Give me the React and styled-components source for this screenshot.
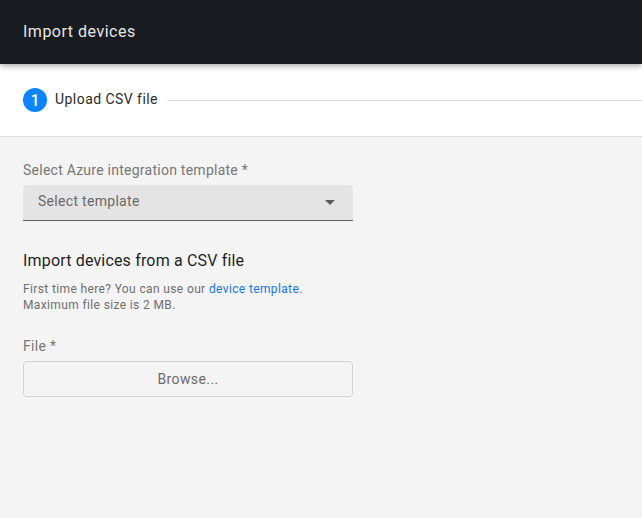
import styled, { createGlobalStyle } from "styled-components";

const GlobalStyle = createGlobalStyle`
  html, body {
    margin: 0;
    padding: 0;
    background: #f4f4f4;
    font-family: Roboto, "Liberation Sans", sans-serif;
  }
`;

const App = () => {
  return (
    <Page>
      <GlobalStyle />
      <Header>
        <HeaderTitle>Import devices</HeaderTitle>
      </Header>
      <Stepper>
        <StepBadge>1</StepBadge>
        <StepLabel>Upload CSV file</StepLabel>
        <StepLine />
      </Stepper>
      <Content>
        <Label>Select Azure integration template *</Label>
        <Select>
          <SelectText>Select template</SelectText>
          <Caret />
        </Select>
        <SectionTitle>Import devices from a CSV file</SectionTitle>
        <Help>
          First time here? You can use our <Link href="#">device template</Link>.
          <br />
          Maximum file size is 2 MB.
        </Help>
        <FileLabel>File *</FileLabel>
        <BrowseButton>Browse...</BrowseButton>
      </Content>
    </Page>
  );
};

export default App;

const Page = styled.div`
  min-height: 518px;
  background: #f4f4f4;
`;

const Header = styled.div`
  height: 64px;
  background: #181b1f;
  display: flex;
  align-items: center;
  padding: 0 23px;
  box-shadow: 0 2px 6px rgba(0, 0, 0, 0.35);
  position: relative;
  z-index: 1;
`;

const HeaderTitle = styled.h1`
  margin: 0 0 2px;
  font-size: 16px;
  font-weight: 400;
  letter-spacing: 0.5px;
  color: #e6e6e6;
`;

const Stepper = styled.div`
  height: 72px;
  background: #fff;
  border-bottom: 1px solid #dcdcdc;
  display: flex;
  align-items: center;
  padding-left: 23px;
`;

const StepBadge = styled.span`
  width: 24px;
  height: 24px;
  border-radius: 50%;
  background: #0a84ff;
  color: #fff;
  font-size: 16px;
  font-weight: 500;
  display: flex;
  align-items: center;
  justify-content: center;
`;

const StepLabel = styled.span`
  margin: 0 0 2px 8px;
  font-size: 14px;
  letter-spacing: 0.45px;
  color: #2b2b2b;
`;

const StepLine = styled.div`
  flex: 1;
  height: 1px;
  background: #dcdcdc;
  margin-left: 9px;
`;

const Content = styled.div`
  padding: 24px 23px 0;
  width: 330px;
  display: flex;
  flex-direction: column;
`;

const Label = styled.div`
  font-size: 14px;
  letter-spacing: 0.25px;
  color: #777;
  line-height: 18px;
`;

const Select = styled.div`
  margin-top: 6px;
  height: 35px;
  background: #e4e4e4;
  border-radius: 4px 4px 0 0;
  border-bottom: 1px solid #5c5c5c;
  display: flex;
  align-items: center;
  justify-content: space-between;
  padding: 0 18px 0 15px;
`;

const SelectText = styled.span`
  font-size: 14px;
  letter-spacing: 0.3px;
  color: #6a6a6a;
  margin-bottom: 3px;
`;

const Caret = styled.span`
  width: 0;
  height: 0;
  border-left: 5px solid transparent;
  border-right: 5px solid transparent;
  border-top: 5px solid #5a5a5a;
`;

const SectionTitle = styled.h2`
  margin: 30px 0 0;
  font-size: 16px;
  font-weight: 400;
  letter-spacing: 0.17px;
  color: #1f1f1f;
  line-height: 20px;
`;

const Help = styled.p`
  margin: 10px 0 0;
  font-size: 12px;
  line-height: 16px;
  letter-spacing: 0.37px;
  color: #6f6f6f;
`;

const Link = styled.a`
  color: #1a73e8;
  text-decoration: none;
`;

const FileLabel = styled.div`
  margin-top: 24px;
  font-size: 14px;
  letter-spacing: 0.3px;
  color: #777;
  line-height: 18px;
`;

const BrowseButton = styled.button`
  margin-top: 6px;
  height: 36px;
  background: #f4f4f4;
  border: 1px solid #d3d3d3;
  border-radius: 4px;
  font-family: Roboto, "Liberation Sans", sans-serif;
  font-size: 14px;
  letter-spacing: 0.4px;
  color: #6a6a6a;
  cursor: pointer;
`;
